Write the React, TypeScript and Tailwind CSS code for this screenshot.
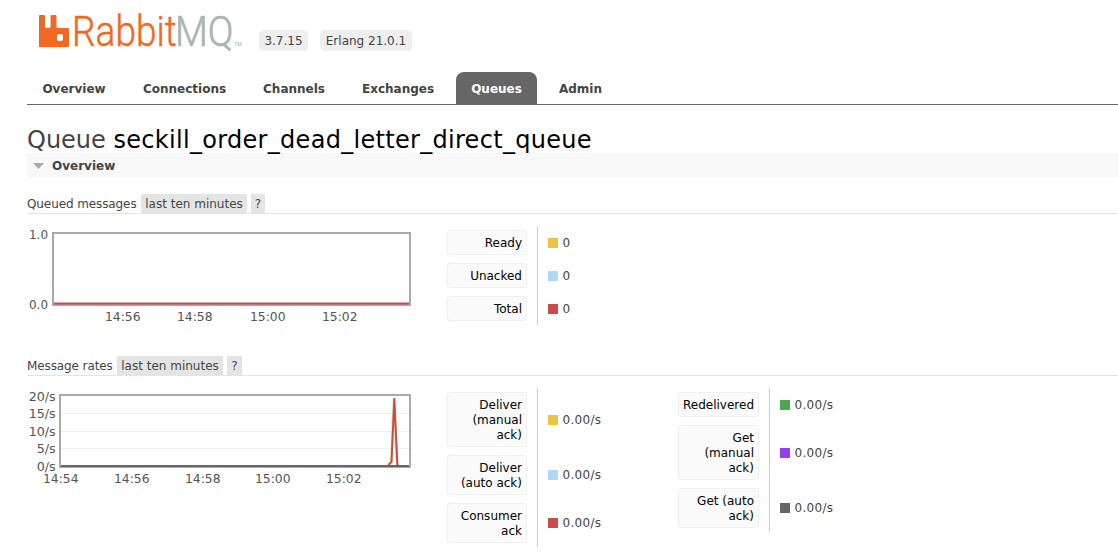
import React from "react";

type Rate = { label: string[]; value: string; swatch: string; row: string };

const messages: Rate[] = [
  { label: ["Ready"], value: "0", swatch: "bg-[#edc240]", row: "h-[33px]" },
  { label: ["Unacked"], value: "0", swatch: "bg-[#afd8f8]", row: "h-[33px]" },
  { label: ["Total"], value: "0", swatch: "bg-[#cb4b4b]", row: "h-[33px]" },
];

const ratesLeft: Rate[] = [
  { label: ["Deliver", "(manual", "ack)"], value: "0.00/s", swatch: "bg-[#edc240]", row: "h-[63px]" },
  { label: ["Deliver", "(auto ack)"], value: "0.00/s", swatch: "bg-[#afd8f8]", row: "h-[48px]" },
  { label: ["Consumer", "ack"], value: "0.00/s", swatch: "bg-[#cb4b4b]", row: "h-[48px]" },
];

const ratesRight: Rate[] = [
  { label: ["Redelivered"], value: "0.00/s", swatch: "bg-[#4da74d]", row: "h-[33px]" },
  { label: ["Get", "(manual", "ack)"], value: "0.00/s", swatch: "bg-[#9440ed]", row: "h-[63px]" },
  { label: ["Get (auto", "ack)"], value: "0.00/s", swatch: "bg-[#666666]", row: "h-[48px]" },
];

function Legend({ rows, width }: { rows: Rate[]; width: string }) {
  return (
    <div className="flex shrink-0 items-start">
      <div className={`${width} border-r border-[#cccccc] pr-[10px]`}>
        {rows.map((r) => (
          <div key={r.label.join(" ")} className={`${r.row} py-1`}>
            <div className="h-full rounded-[3px] border border-[#f0f0f0] bg-[#fafafa] px-1 pt-[5px] text-right leading-[15px] text-black">
              {r.label.map((l) => (
                <div key={l} className="whitespace-nowrap">{l}</div>
              ))}
            </div>
          </div>
        ))}
      </div>
      <div className="pl-[10px]">
        {rows.map((r) => (
          <div key={r.label.join(" ")} className={`${r.row} flex items-center gap-[4.5px]`}>
            <span className={`size-[10px] ${r.swatch}`} />
            <span className="pt-px leading-[15px] tracking-[0.3px]">{r.value}</span>
          </div>
        ))}
      </div>
    </div>
  );
}

function SubHeading({ title, width, help }: { title: string; width: string; help: string }) {
  return (
    <div className="flex h-[20px] items-start gap-1 border-b border-[#e4e4e4] leading-[20px]">
      <span className={`${width} tracking-[-0.1px] whitespace-nowrap`}>{title}</span>
      <span className="h-[19px] w-[106px] bg-[#e4e4e4] text-center whitespace-nowrap">last ten minutes</span>
      <span className={`${help} h-[19px] bg-[#e4e4e4] text-center text-[#444466]`}>?</span>
    </div>
  );
}

function Label({ x, y, w, children, end }: { x: number; y: number; w: number; children: string; end?: boolean }) {
  return (
    <text x={end ? x - w : x} y={y} textLength={w} lengthAdjust="spacingAndGlyphs">
      {children}
    </text>
  );
}

function QueuedChart() {
  return (
    <svg width="420" height="110" viewBox="0 0 420 110" className="shrink-0 fill-[#545454] text-[12px]">
      <rect x="26" y="14" width="357" height="72" fill="none" stroke="#aaaaaa" strokeWidth="2" />
      <path d="M27 84.5H382" stroke="#cb4b4b" strokeWidth="2" />
      <Label end x={21} y={20} w={19}>1.0</Label>
      <Label end x={21} y={90} w={19}>0.0</Label>
      <Label x={78} y={102} w={35.5}>14:56</Label>
      <Label x={150} y={102} w={35.5}>14:58</Label>
      <Label x={223} y={102} w={35.5}>15:00</Label>
      <Label x={295} y={102} w={35.5}>15:02</Label>
    </svg>
  );
}

function RatesChart() {
  return (
    <svg width="420" height="110" viewBox="0 0 420 110" className="shrink-0 fill-[#545454] text-[12px]">
      <path d="M34 25.5H382M34 43.5H382M34 60.5H382" stroke="#eeeeee" />
      <rect x="33" y="7" width="350" height="72" fill="none" stroke="#aaaaaa" strokeWidth="2" />
      <path d="M361 76.5L364.3 74L367.1 11L370.2 77" fill="none" stroke="#edc240" strokeWidth="2.6" strokeLinejoin="round" opacity=".55" />
      <path d="M361.5 77L364.5 74L367.3 11L370.4 77" fill="none" stroke="#cb4b4b" strokeWidth="2" strokeLinejoin="round" />
      <path d="M34 78H382" stroke="#666666" strokeWidth="2" />
      <Label end x={28.7} y={13} w={27}>20/s</Label>
      <Label end x={28.7} y={30} w={27}>15/s</Label>
      <Label end x={28.7} y={48} w={27}>10/s</Label>
      <Label end x={28.7} y={65} w={19}>5/s</Label>
      <Label end x={28.7} y={83} w={19}>0/s</Label>
      <Label x={16} y={95} w={35.5}>14:54</Label>
      <Label x={87} y={95} w={35.5}>14:56</Label>
      <Label x={158} y={95} w={35.5}>14:58</Label>
      <Label x={228} y={95} w={35.5}>15:00</Label>
      <Label x={299} y={95} w={35.5}>15:02</Label>
    </svg>
  );
}

function Logo() {
  return (
    <svg width="208" height="60" viewBox="0 -8 208 60" className="-mt-2 font-['Roboto',sans-serif]">
      <path
        fillRule="evenodd"
        fill="#f26822"
        d="M1 5H5Q6 5 6 6V17Q6 18 7 18H10.5Q11.5 18 11.5 17V6Q11.5 5 12.5 5H16.5Q17.5 5 17.5 6V17Q17.5 18 18.5 18H29Q30 18 30 19V36Q30 37 29 37H0V6Q0 5 1 5ZM20 24Q18 24 18 26V29Q18 31 20 31H22Q24 31 24 29V26Q24 24 22 24Z"
      />
      <text transform="translate(33 36) scale(.68 1)" x="0" y="0" fontSize="43" fontWeight="300" fill="#f26822" stroke="#f26822" strokeWidth=".5" textLength="154" lengthAdjust="spacingAndGlyphs">Rabbit</text>
      <text transform="translate(136 36) scale(.68 1)" x="0" y="0" fontSize="43" fontWeight="300" fill="#a9b5b0" stroke="#a9b5b0" strokeWidth=".7" textLength="86" lengthAdjust="spacingAndGlyphs">MQ</text>
      <text x="195" y="36" fontSize="6" fill="#a9b5b0" textLength="8" lengthAdjust="spacingAndGlyphs">TM</text>
    </svg>
  );
}

const tabs = [
  { name: "Overview", size: "w-[94px]" },
  { name: "Connections", size: "w-[113px]" },
  { name: "Channels", size: "w-[92px]" },
  { name: "Exchanges", size: "w-[102px]" },
  { name: "Queues", size: "w-[81px]" },
  { name: "Admin", size: "w-[73px]" },
];

export default function App() {
  return (
    <div className="h-[554px] overflow-hidden bg-white pl-[27px] font-['Verdana','DejaVu_Sans',sans-serif] text-[12px] text-[#444444]">
      <header className="flex h-[72px] items-start pt-[10px] pl-3">
        <Logo />
        <div className="flex gap-3 pt-5 pl-3 leading-[22px]">
          <span className="h-[21px] w-[49px] rounded-[5px] bg-[#eeeeee] text-center whitespace-nowrap">3.7.15</span>
          <span className="h-[21px] w-[92px] rounded-[5px] bg-[#eeeeee] text-center whitespace-nowrap">Erlang 21.0.1</span>
        </div>
      </header>
      <nav className="flex h-[33px] gap-[7px] border-b border-[#666666] font-bold">
        {tabs.map((t) => (
          <a
            key={t.name}
            className={`${t.size} h-8 rounded-t-[8px] text-center leading-[34px] whitespace-nowrap ${t.name === "Queues" ? "bg-[#666666] text-white" : ""}`}
          >
            {t.name}
          </a>
        ))}
      </nav>
      <h1 className="mt-[23px] h-[25px] text-[24px] leading-[24px] whitespace-nowrap">
        Queue <span className="tracking-[0.3px] text-black">seckill_order_dead_letter_direct_queue</span>
      </h1>
      <h2 className="flex h-[25px] items-center bg-[#f8f8f8] pl-[6px] font-bold">
        <svg width="11" height="6" viewBox="0 0 11 6">
          <path d="M0 0H11L5.5 6Z" fill="#aaaaaa" />
        </svg>
        <span className="pl-2">Overview</span>
      </h2>
      <section className="pt-4">
        <SubHeading title="Queued messages" width="w-[110px]" help="w-[14px]" />
        <div className="flex items-start pt-3">
          <div className="-mt-[7px] h-[137px]"><QueuedChart /></div>
          <Legend rows={messages} width="w-[91px]" />
        </div>
      </section>
      <section>
        <SubHeading title="Message rates" width="w-[86px]" help="w-[15px]" />
        <div className="flex items-start pt-3">
          <RatesChart />
          <div className="w-[231px] shrink-0">
            <Legend rows={ratesLeft} width="w-[91px]" />
          </div>
          <Legend rows={ratesRight} width="w-[92px]" />
        </div>
      </section>
    </div>
  );
}
